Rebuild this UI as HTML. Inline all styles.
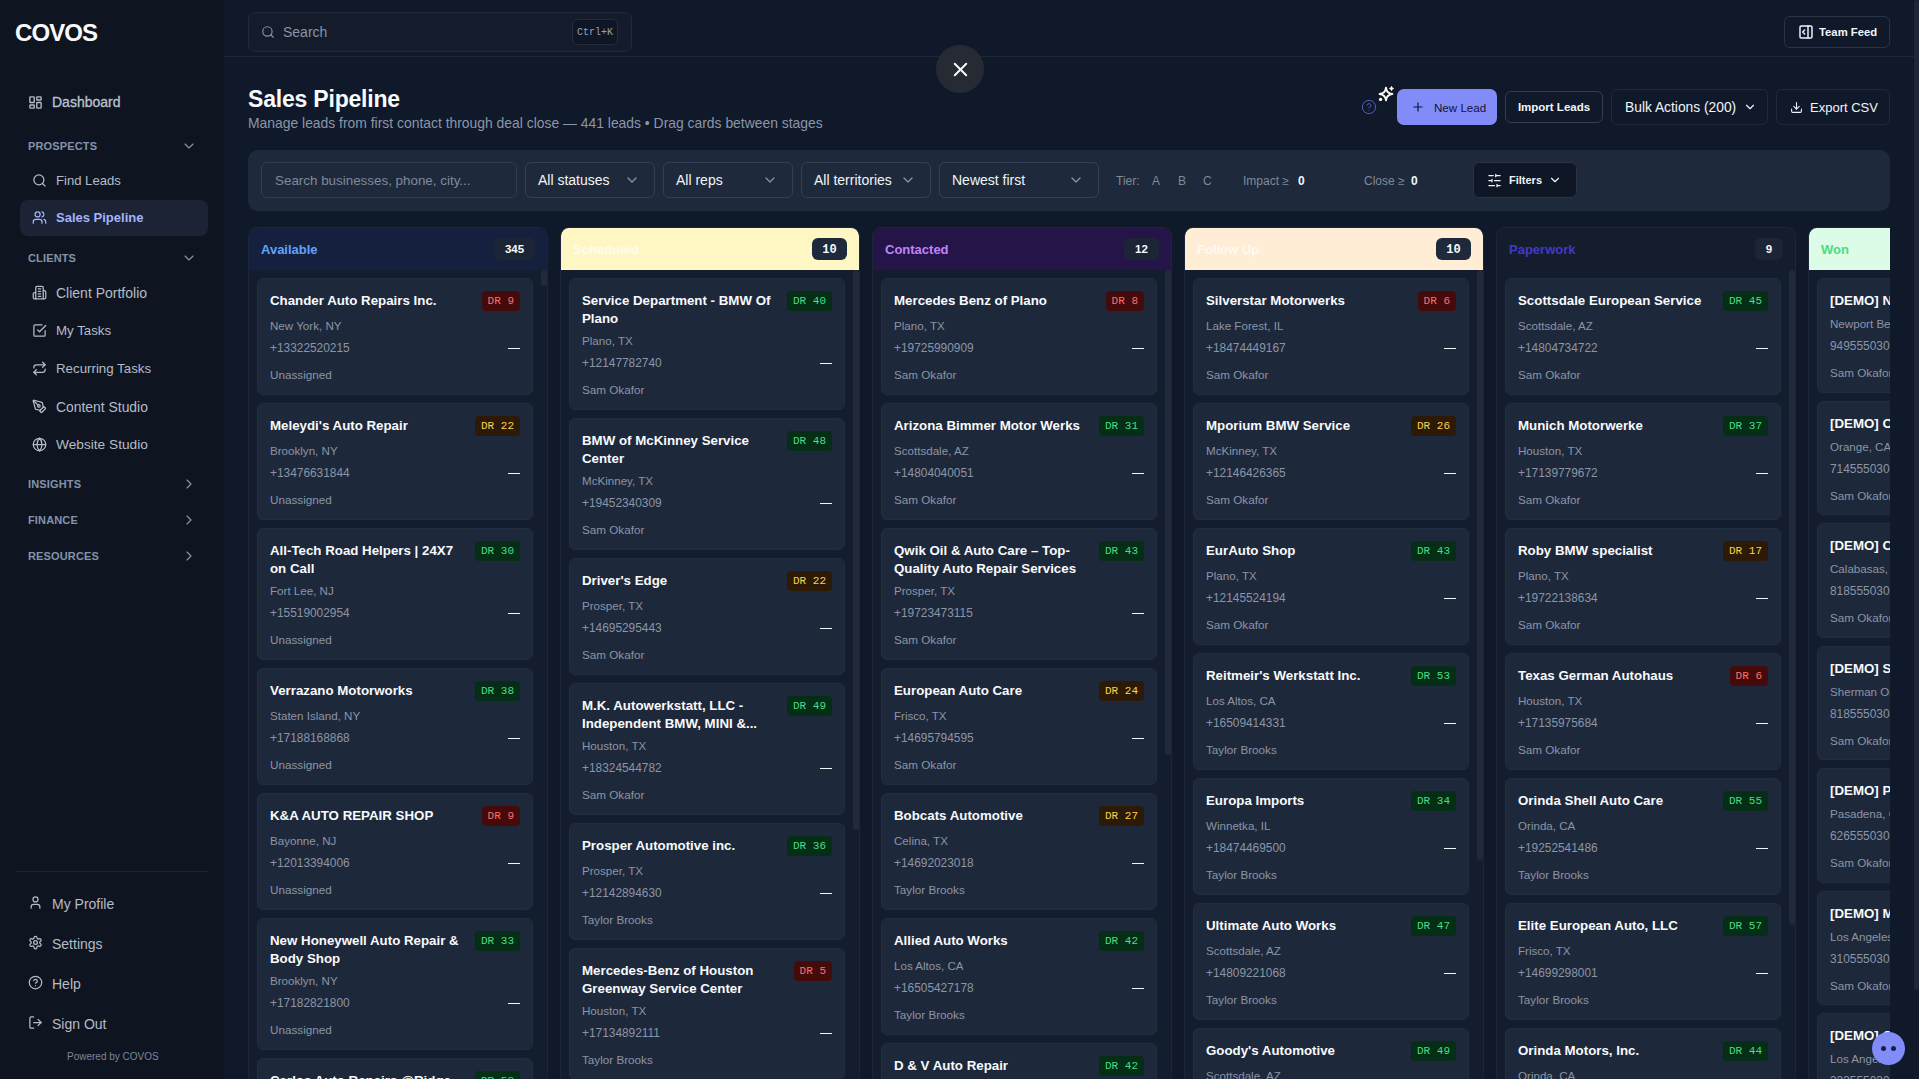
<!DOCTYPE html>
<html><head><meta charset="utf-8"><title>Sales Pipeline</title>
<style>
*{margin:0;padding:0}
html,body{width:1919px;height:1079px;overflow:hidden;background:#10192a;font-family:"Liberation Sans",sans-serif;}
svg{display:block}
</style></head><body>
<div style="position:relative;width:1919px;height:1079px;overflow:hidden;">
<div style="position:absolute;left:0;top:0;width:224px;height:1079px;background:#0f1520;"><div style="position:absolute;left:15px;top:18px;font-size:24px;font-weight:700;color:#f8fafc;letter-spacing:-0.9px;line-height:30px;">COVOS</div><div style="position:absolute;left:28px;top:94.5px;color:#b4bcc8;width:15px;height:15px;line-height:0;"><svg width="15" height="15" viewBox="0 0 24 24" fill="none" stroke="currentColor" stroke-width="2.2" stroke-linecap="round" stroke-linejoin="round" ><rect width="7" height="9" x="3" y="3" rx="1"/><rect width="7" height="5" x="14" y="3" rx="1"/><rect width="7" height="9" x="14" y="12" rx="1"/><rect width="7" height="5" x="3" y="16" rx="1"/></svg></div><div style="position:absolute;left:52px;top:93px;font-size:14px;line-height:18px;color:#b4bcc8;white-space:nowrap;font-weight:400;-webkit-text-stroke:0.3px;color:#b9c3d2;">Dashboard</div><div style="position:absolute;left:28px;top:138px;font-size:11px;font-weight:700;letter-spacing:0.15px;color:#8492ab;line-height:16px;">PROSPECTS</div><div style="position:absolute;left:181px;top:138px;color:#8a93a3;line-height:0;"><svg width="16" height="16" viewBox="0 0 24 24" fill="none" stroke="currentColor" stroke-width="1.75" stroke-linecap="round" stroke-linejoin="round" ><path d="m6 9 6 6 6-6"/></svg></div><div style="position:absolute;left:32px;top:173px;color:#b4bcc8;width:15px;height:15px;line-height:0;"><svg width="15" height="15" viewBox="0 0 24 24" fill="none" stroke="currentColor" stroke-width="2" stroke-linecap="round" stroke-linejoin="round" ><circle cx="11" cy="11" r="8"/><path d="m21 21-4.3-4.3"/></svg></div><div style="position:absolute;left:56px;top:172px;font-size:13.1px;line-height:18px;color:#b4bcc8;white-space:nowrap;font-weight:400;">Find Leads</div><div style="position:absolute;left:20px;top:200px;width:188px;height:36px;background:#1c2335;border-radius:8px;"></div><div style="position:absolute;left:32px;top:210px;color:#a5b4fc;width:15px;height:15px;line-height:0;"><svg width="15" height="15" viewBox="0 0 24 24" fill="none" stroke="currentColor" stroke-width="2" stroke-linecap="round" stroke-linejoin="round" ><path d="M16 21v-2a4 4 0 0 0-4-4H6a4 4 0 0 0-4 4v2"/><circle cx="9" cy="7" r="4"/><path d="M22 21v-2a4 4 0 0 0-3-3.87"/><path d="M16 3.13a4 4 0 0 1 0 7.75"/></svg></div><div style="position:absolute;left:56px;top:209px;font-size:13px;line-height:18px;color:#a5b4fc;white-space:nowrap;font-weight:700;">Sales Pipeline</div><div style="position:absolute;left:28px;top:250px;font-size:11px;font-weight:700;letter-spacing:0.15px;color:#8492ab;line-height:16px;">CLIENTS</div><div style="position:absolute;left:181px;top:250px;color:#8a93a3;line-height:0;"><svg width="16" height="16" viewBox="0 0 24 24" fill="none" stroke="currentColor" stroke-width="1.75" stroke-linecap="round" stroke-linejoin="round" ><path d="m6 9 6 6 6-6"/></svg></div><div style="position:absolute;left:32px;top:285px;color:#b4bcc8;width:15px;height:15px;line-height:0;"><svg width="15" height="15" viewBox="0 0 24 24" fill="none" stroke="currentColor" stroke-width="2" stroke-linecap="round" stroke-linejoin="round" ><path d="M6 22V4a2 2 0 0 1 2-2h8a2 2 0 0 1 2 2v18Z"/><path d="M6 12H4a2 2 0 0 0-2 2v6a2 2 0 0 0 2 2h2"/><path d="M18 9h2a2 2 0 0 1 2 2v9a2 2 0 0 1-2 2h-2"/><path d="M10 6h4"/><path d="M10 10h4"/><path d="M10 14h4"/><path d="M10 18h4"/></svg></div><div style="position:absolute;left:56px;top:284px;font-size:14px;line-height:18px;color:#b4bcc8;white-space:nowrap;font-weight:400;">Client Portfolio</div><div style="position:absolute;left:32px;top:323px;color:#b4bcc8;width:15px;height:15px;line-height:0;"><svg width="15" height="15" viewBox="0 0 24 24" fill="none" stroke="currentColor" stroke-width="2" stroke-linecap="round" stroke-linejoin="round" ><path d="m9 11 3 3L22 4"/><path d="M21 12v7a2 2 0 0 1-2 2H5a2 2 0 0 1-2-2V5a2 2 0 0 1 2-2h11"/></svg></div><div style="position:absolute;left:56px;top:322px;font-size:13.3px;line-height:18px;color:#b4bcc8;white-space:nowrap;font-weight:400;">My Tasks</div><div style="position:absolute;left:32px;top:361px;color:#b4bcc8;width:15px;height:15px;line-height:0;"><svg width="15" height="15" viewBox="0 0 24 24" fill="none" stroke="currentColor" stroke-width="2" stroke-linecap="round" stroke-linejoin="round" ><path d="m17 2 4 4-4 4"/><path d="M3 11v-1a4 4 0 0 1 4-4h14"/><path d="m7 22-4-4 4-4"/><path d="M21 13v1a4 4 0 0 1-4 4H3"/></svg></div><div style="position:absolute;left:56px;top:360px;font-size:13.3px;line-height:18px;color:#b4bcc8;white-space:nowrap;font-weight:400;">Recurring Tasks</div><div style="position:absolute;left:32px;top:399px;color:#b4bcc8;width:15px;height:15px;line-height:0;"><svg width="15" height="15" viewBox="0 0 24 24" fill="none" stroke="currentColor" stroke-width="2" stroke-linecap="round" stroke-linejoin="round" ><path d="M15.707 21.293a1 1 0 0 1-1.414 0l-1.586-1.586a1 1 0 0 1 0-1.414l5.586-5.586a1 1 0 0 1 1.414 0l1.586 1.586a1 1 0 0 1 0 1.414z"/><path d="m18 13-1.375-6.874a1 1 0 0 0-.746-.776L3.235 2.028a1 1 0 0 0-1.207 1.207L5.35 15.879a1 1 0 0 0 .776.746L13 18"/><path d="m2.3 2.3 7.286 7.286"/><circle cx="11" cy="11" r="2"/></svg></div><div style="position:absolute;left:56px;top:398px;font-size:13.9px;line-height:18px;color:#b4bcc8;white-space:nowrap;font-weight:400;">Content Studio</div><div style="position:absolute;left:32px;top:437px;color:#b4bcc8;width:15px;height:15px;line-height:0;"><svg width="15" height="15" viewBox="0 0 24 24" fill="none" stroke="currentColor" stroke-width="2" stroke-linecap="round" stroke-linejoin="round" ><circle cx="12" cy="12" r="10"/><path d="M12 2a14.5 14.5 0 0 0 0 20 14.5 14.5 0 0 0 0-20"/><path d="M2 12h20"/></svg></div><div style="position:absolute;left:56px;top:436px;font-size:13.7px;line-height:18px;color:#b4bcc8;white-space:nowrap;font-weight:400;">Website Studio</div><div style="position:absolute;left:28px;top:476px;font-size:11px;font-weight:700;letter-spacing:0.15px;color:#8492ab;line-height:16px;">INSIGHTS</div><div style="position:absolute;left:181px;top:476px;color:#8a93a3;line-height:0;"><svg width="16" height="16" viewBox="0 0 24 24" fill="none" stroke="currentColor" stroke-width="1.75" stroke-linecap="round" stroke-linejoin="round" ><path d="m9 18 6-6-6-6"/></svg></div><div style="position:absolute;left:28px;top:512px;font-size:11px;font-weight:700;letter-spacing:0.15px;color:#8492ab;line-height:16px;">FINANCE</div><div style="position:absolute;left:181px;top:512px;color:#8a93a3;line-height:0;"><svg width="16" height="16" viewBox="0 0 24 24" fill="none" stroke="currentColor" stroke-width="1.75" stroke-linecap="round" stroke-linejoin="round" ><path d="m9 18 6-6-6-6"/></svg></div><div style="position:absolute;left:28px;top:548px;font-size:11px;font-weight:700;letter-spacing:0.15px;color:#8492ab;line-height:16px;">RESOURCES</div><div style="position:absolute;left:181px;top:548px;color:#8a93a3;line-height:0;"><svg width="16" height="16" viewBox="0 0 24 24" fill="none" stroke="currentColor" stroke-width="1.75" stroke-linecap="round" stroke-linejoin="round" ><path d="m9 18 6-6-6-6"/></svg></div><div style="position:absolute;left:16px;top:871px;width:192px;height:1px;background:#1f2633;"></div><div style="position:absolute;left:28px;top:895px;color:#b4bcc8;width:15px;height:15px;line-height:0;"><svg width="15" height="15" viewBox="0 0 24 24" fill="none" stroke="currentColor" stroke-width="2" stroke-linecap="round" stroke-linejoin="round" ><path d="M19 21v-2a4 4 0 0 0-4-4H9a4 4 0 0 0-4 4v2"/><circle cx="12" cy="7" r="4"/></svg></div><div style="position:absolute;left:52px;top:895px;font-size:14px;line-height:18px;color:#b4bcc8;white-space:nowrap;font-weight:400;">My Profile</div><div style="position:absolute;left:28px;top:935px;color:#b4bcc8;width:15px;height:15px;line-height:0;"><svg width="15" height="15" viewBox="0 0 24 24" fill="none" stroke="currentColor" stroke-width="2" stroke-linecap="round" stroke-linejoin="round" ><path d="M12.22 2h-.44a2 2 0 0 0-2 2v.18a2 2 0 0 1-1 1.73l-.43.25a2 2 0 0 1-2 0l-.15-.08a2 2 0 0 0-2.73.73l-.22.38a2 2 0 0 0 .73 2.730l.15.1a2 2 0 0 1 1 1.72v.51a2 2 0 0 1-1 1.74l-.15.09a2 2 0 0 0-.73 2.73l.22.38a2 2 0 0 0 2.73.73l.15-.08a2 2 0 0 1 2 0l.43.25a2 2 0 0 1 1 1.73V20a2 2 0 0 0 2 2h.44a2 2 0 0 0 2-2v-.18a2 2 0 0 1 1-1.73l.43-.25a2 2 0 0 1 2 0l.15.08a2 2 0 0 0 2.73-.73l.22-.39a2 2 0 0 0-.73-2.73l-.15-.08a2 2 0 0 1-1-1.74v-.5a2 2 0 0 1 1-1.74l.15-.09a2 2 0 0 0 .73-2.73l-.22-.38a2 2 0 0 0-2.73-.73l-.15.08a2 2 0 0 1-2 0l-.43-.25a2 2 0 0 1-1-1.73V4a2 2 0 0 0-2-2z"/><circle cx="12" cy="12" r="3"/></svg></div><div style="position:absolute;left:52px;top:935px;font-size:14px;line-height:18px;color:#b4bcc8;white-space:nowrap;font-weight:400;">Settings</div><div style="position:absolute;left:28px;top:975px;color:#b4bcc8;width:15px;height:15px;line-height:0;"><svg width="15" height="15" viewBox="0 0 24 24" fill="none" stroke="currentColor" stroke-width="2" stroke-linecap="round" stroke-linejoin="round" ><circle cx="12" cy="12" r="10"/><path d="M9.09 9a3 3 0 0 1 5.83 1c0 2-3 3-3 3"/><path d="M12 17h.01"/></svg></div><div style="position:absolute;left:52px;top:975px;font-size:14px;line-height:18px;color:#b4bcc8;white-space:nowrap;font-weight:400;">Help</div><div style="position:absolute;left:28px;top:1015px;color:#b4bcc8;width:15px;height:15px;line-height:0;"><svg width="15" height="15" viewBox="0 0 24 24" fill="none" stroke="currentColor" stroke-width="2" stroke-linecap="round" stroke-linejoin="round" ><path d="M9 21H5a2 2 0 0 1-2-2V5a2 2 0 0 1 2-2h4"/><path d="m16 17 5-5-5-5"/><path d="M21 12H9"/></svg></div><div style="position:absolute;left:52px;top:1015px;font-size:14px;line-height:18px;color:#b4bcc8;white-space:nowrap;font-weight:400;">Sign Out</div><div style="position:absolute;left:67px;top:1050px;font-size:10px;color:#7c8699;line-height:14px;white-space:nowrap;">Powered by COVOS</div></div><div style="position:absolute;left:224px;top:56px;width:1695px;height:1px;background:#1f2737;"></div><div style="position:absolute;left:248px;top:12px;width:382px;height:38px;background:#141b2a;border:1px solid #222a3a;border-radius:7px;"></div><div style="position:absolute;left:261px;top:25px;color:#8a93a3;line-height:0;"><svg width="14" height="14" viewBox="0 0 24 24" fill="none" stroke="currentColor" stroke-width="2" stroke-linecap="round" stroke-linejoin="round" ><circle cx="11" cy="11" r="8"/><path d="m21 21-4.3-4.3"/></svg></div><div style="position:absolute;left:283px;top:23px;font-size:14px;line-height:18px;color:#8a93a3;">Search</div><div style="position:absolute;left:572px;top:19px;width:46px;height:26px;box-sizing:border-box;border:1px solid #252d3d;border-radius:5px;background:#0f1626;font-family:'Liberation Mono',monospace;font-size:10px;color:#98a2b3;line-height:25px;text-align:center;">Ctrl+K</div><div style="position:absolute;left:1784px;top:16px;box-sizing:border-box;width:106px;height:32px;border:1px solid #2c3444;border-radius:6px;display:flex;align-items:center;padding-left:13px;font-size:11.3px;font-weight:700;color:#f1f5f9;"><svg width="16" height="16" viewBox="0 0 24 24" fill="none" stroke="currentColor" stroke-width="2.2" stroke-linecap="round" stroke-linejoin="round" ><rect width="18" height="18" x="3" y="3" rx="2"/><path d="M15 3v18"/><path d="m10 15-3-3 3-3"/></svg><span style="margin-left:5px">Team Feed</span></div><div style="position:absolute;left:936px;top:45px;width:48px;height:48px;border-radius:50%;background:#262b33;color:#f8fafc;display:flex;align-items:center;justify-content:center;"><svg width="23" height="23" viewBox="0 0 24 24" fill="none" stroke="currentColor" stroke-width="2" stroke-linecap="round" stroke-linejoin="round" ><path d="M18 6 6 18"/><path d="m6 6 12 12"/></svg></div><div style="position:absolute;left:248px;top:84px;font-size:23px;font-weight:700;color:#f8fafc;line-height:30px;letter-spacing:-0.2px;">Sales Pipeline</div><div style="position:absolute;left:248px;top:114px;font-size:13.9px;color:#8b96a8;line-height:18px;white-space:nowrap;">Manage leads from first contact through deal close — 441 leads • Drag cards between stages</div><div style="position:absolute;left:1361px;top:99px;color:#5a5fd0;line-height:0;"><svg width="16" height="16" viewBox="0 0 24 24" fill="none" stroke="currentColor" stroke-width="1.4" stroke-linecap="round" stroke-linejoin="round" ><circle cx="12" cy="12" r="10"/><path d="M9.09 9a3 3 0 0 1 5.83 1c0 2-3 3-3 3"/><path d="M12 17h.01"/></svg></div><div style="position:absolute;left:1377px;top:85px;line-height:0;"><svg width="20" height="20" viewBox="0 0 20 20"><path d="M9 2.6 Q9.6 8.4 15.4 9 Q9.6 9.6 9 15.4 Q8.4 9.6 2.6 9 Q8.4 8.4 9 2.6 Z" fill="none" stroke="#fffaf0" stroke-width="1.9" stroke-linejoin="round"/><path d="M14.5 1.3 Q14.8 3.2 16.6 3.5 Q14.8 3.8 14.5 5.7 Q14.2 3.8 12.4 3.5 Q14.2 3.2 14.5 1.3Z" fill="#fff4e0" stroke="#fff4e0" stroke-width="0.8"/><circle cx="3.6" cy="14.4" r="1.7" fill="#fffaf0"/></svg></div><div style="position:absolute;left:1397px;top:89px;box-sizing:border-box;width:100px;height:36px;border-radius:7px;background:#818cf8;color:#14123a;display:flex;align-items:center;padding-left:14px;font-size:11.6px;"><svg width="14" height="14" viewBox="0 0 24 24" fill="none" stroke="currentColor" stroke-width="2" stroke-linecap="round" stroke-linejoin="round" ><path d="M5 12h14"/><path d="M12 5v14"/></svg><span style="margin-left:9px">New Lead</span></div><div style="position:absolute;left:1505px;top:91px;box-sizing:border-box;width:98px;height:32px;border:1px solid #363d4c;border-radius:6px;display:flex;align-items:center;justify-content:center;font-size:11.5px;font-weight:700;color:#f1f5f9;">Import Leads</div><div style="position:absolute;left:1611px;top:89px;box-sizing:border-box;width:157px;height:36px;border:1px solid #222a39;border-radius:6px;display:flex;align-items:center;padding-left:13px;font-size:13.8px;color:#f1f5f9;">Bulk Actions (200)<svg width="14" height="14" viewBox="0 0 24 24" fill="none" stroke="currentColor" stroke-width="2" stroke-linecap="round" stroke-linejoin="round" style="margin-left:7px"><path d="m6 9 6 6 6-6"/></svg></div><div style="position:absolute;left:1776px;top:89px;box-sizing:border-box;width:114px;height:36px;border:1px solid #222a39;border-radius:6px;display:flex;align-items:center;padding-left:13px;font-size:13px;color:#f1f5f9;"><svg width="13" height="13" viewBox="0 0 24 24" fill="none" stroke="currentColor" stroke-width="2" stroke-linecap="round" stroke-linejoin="round" ><path d="M21 15v4a2 2 0 0 1-2 2H5a2 2 0 0 1-2-2v-4"/><path d="m7 10 5 5 5-5"/><path d="M12 15V3"/></svg><span style="margin-left:7px">Export CSV</span></div><div style="position:absolute;left:248px;top:150px;width:1642px;height:61px;background:#1e293b;border-radius:10px;"></div><div style="position:absolute;left:261px;top:162px;box-sizing:border-box;width:256px;height:36px;border:1px solid #333d4f;border-radius:6px;background:#1e293b;padding-left:13px;font-size:13.4px;line-height:36px;color:#808a9b;white-space:nowrap;">Search businesses, phone, city...</div><div style="position:absolute;left:525px;top:162px;box-sizing:border-box;width:130px;height:36px;border:1px solid #364052;border-radius:6px;background:#1e293b;padding:0 12px 0 12px;display:flex;align-items:center;justify-content:space-between;font-size:14px;color:#f1f5f9;"><span>All statuses</span><svg width="16" height="16" viewBox="0 0 24 24" fill="none" stroke="currentColor" stroke-width="1.9" stroke-linecap="round" stroke-linejoin="round" style="color:#8a94a5;margin-right:2px"><path d="m6 9 6 6 6-6"/></svg></div><div style="position:absolute;left:663px;top:162px;box-sizing:border-box;width:130px;height:36px;border:1px solid #364052;border-radius:6px;background:#1e293b;padding:0 12px 0 12px;display:flex;align-items:center;justify-content:space-between;font-size:14px;color:#f1f5f9;"><span>All reps</span><svg width="16" height="16" viewBox="0 0 24 24" fill="none" stroke="currentColor" stroke-width="1.9" stroke-linecap="round" stroke-linejoin="round" style="color:#8a94a5;margin-right:2px"><path d="m6 9 6 6 6-6"/></svg></div><div style="position:absolute;left:801px;top:162px;box-sizing:border-box;width:130px;height:36px;border:1px solid #364052;border-radius:6px;background:#1e293b;padding:0 12px 0 12px;display:flex;align-items:center;justify-content:space-between;font-size:14px;color:#f1f5f9;"><span>All territories</span><svg width="16" height="16" viewBox="0 0 24 24" fill="none" stroke="currentColor" stroke-width="1.9" stroke-linecap="round" stroke-linejoin="round" style="color:#8a94a5;margin-right:2px"><path d="m6 9 6 6 6-6"/></svg></div><div style="position:absolute;left:939px;top:162px;box-sizing:border-box;width:160px;height:36px;border:1px solid #364052;border-radius:6px;background:#1e293b;padding:0 12px 0 12px;display:flex;align-items:center;justify-content:space-between;font-size:14px;color:#f1f5f9;"><span>Newest first</span><svg width="16" height="16" viewBox="0 0 24 24" fill="none" stroke="currentColor" stroke-width="1.9" stroke-linecap="round" stroke-linejoin="round" style="color:#8a94a5;margin-right:2px"><path d="m6 9 6 6 6-6"/></svg></div><div style="position:absolute;left:1116px;top:173px;font-size:12px;color:#7f8a9c;line-height:16px;">Tier:</div><div style="position:absolute;left:1152px;top:173px;font-size:12px;color:#7f8a9c;line-height:16px;">A</div><div style="position:absolute;left:1178px;top:173px;font-size:12px;color:#7f8a9c;line-height:16px;">B</div><div style="position:absolute;left:1203px;top:173px;font-size:12px;color:#7f8a9c;line-height:16px;">C</div><div style="position:absolute;left:1243px;top:173px;font-size:12px;color:#7f8a9c;line-height:16px;">Impact ≥</div><div style="position:absolute;left:1298px;top:173px;font-size:12px;font-weight:700;color:#f1f5f9;line-height:16px;">0</div><div style="position:absolute;left:1364px;top:173px;font-size:12px;color:#7f8a9c;line-height:16px;">Close ≥</div><div style="position:absolute;left:1411px;top:173px;font-size:12px;font-weight:700;color:#f1f5f9;line-height:16px;">0</div><div style="position:absolute;left:1473px;top:162px;box-sizing:border-box;width:104px;height:36px;border:1px solid #2a3343;border-radius:6px;background:#0f1626;display:flex;align-items:center;padding-left:13px;font-size:11px;font-weight:700;color:#f1f5f9;"><svg width="15" height="15" viewBox="0 0 24 24" fill="none" stroke="currentColor" stroke-width="2" stroke-linecap="round" stroke-linejoin="round" ><path d="M21 4h-7M10 4H3M21 12h-9M8 12H3M21 20h-5M12 20H3M14 2v4M8 10v4M16 18v4"/></svg><span style="margin-left:7px">Filters</span><svg width="14" height="14" viewBox="0 0 24 24" fill="none" stroke="currentColor" stroke-width="2" stroke-linecap="round" stroke-linejoin="round" style="margin-left:6px"><path d="m6 9 6 6 6-6"/></svg></div><div style="position:absolute;left:248px;top:0;width:1642px;height:1079px;overflow:hidden;"><div style="position:absolute;left:-248px;top:0;"><div style="position:absolute;left:248px;top:227px;width:300px;height:900px;box-sizing:border-box;background:#131d2e;border:1px solid #1d2638;border-radius:9px;overflow:hidden;"><div style="position:absolute;left:0;top:0;width:298px;height:42px;background:#15203f;border-radius:8px 8px 0 0;"></div><div style="position:absolute;left:12px;top:13px;font-size:13px;font-weight:700;color:#60a5fa;line-height:18px;">Available</div><div style="position:absolute;left:245px;top:10px;width:41px;height:22px;border-radius:6px;background:#1c2536;font-size:11.5px;font-weight:700;color:#f8fafc;line-height:23px;text-align:center;">345</div><div style="position:absolute;left:292px;top:42px;width:6px;height:16px;background:#212a3a;border-radius:3px;"></div><div style="position:absolute;left:8px;top:50px;width:276px;height:117px;box-sizing:border-box;background:#1e283b;border:1px solid #232d40;border-radius:6px;overflow:hidden;"><div style="position:absolute;left:12px;top:13px;width:190px;font-size:13.3px;font-weight:700;color:#f8fafc;line-height:18px;white-space:nowrap;">Chander Auto Repairs Inc.</div><div style="position:absolute;right:12px;top:12px;height:20px;padding:0 6px;border-radius:4px;background:#450a0a;color:#f87171;font-family:'Liberation Mono',monospace;font-size:11px;line-height:20px;white-space:pre;">DR 9</div><div style="position:absolute;left:12px;top:39px;font-size:11.6px;color:#8b95a6;line-height:16px;white-space:nowrap;">New York, NY</div><div style="position:absolute;left:12px;top:61px;font-size:11.9px;color:#8b95a6;line-height:16px;white-space:nowrap;">+13322520215</div><div style="position:absolute;right:12px;top:69px;width:12px;height:1.2px;background:#f1f5f9;"></div><div style="position:absolute;left:12px;top:88px;font-size:11.7px;color:#8b95a6;line-height:16px;white-space:nowrap;">Unassigned</div></div><div style="position:absolute;left:8px;top:175px;width:276px;height:117px;box-sizing:border-box;background:#1e283b;border:1px solid #232d40;border-radius:6px;overflow:hidden;"><div style="position:absolute;left:12px;top:13px;width:190px;font-size:13.3px;font-weight:700;color:#f8fafc;line-height:18px;white-space:nowrap;">Meleydi's Auto Repair</div><div style="position:absolute;right:12px;top:12px;height:20px;padding:0 6px;border-radius:4px;background:#2d1a06;color:#fcd34d;font-family:'Liberation Mono',monospace;font-size:11px;line-height:20px;white-space:pre;">DR 22</div><div style="position:absolute;left:12px;top:39px;font-size:11.6px;color:#8b95a6;line-height:16px;white-space:nowrap;">Brooklyn, NY</div><div style="position:absolute;left:12px;top:61px;font-size:11.9px;color:#8b95a6;line-height:16px;white-space:nowrap;">+13476631844</div><div style="position:absolute;right:12px;top:69px;width:12px;height:1.2px;background:#f1f5f9;"></div><div style="position:absolute;left:12px;top:88px;font-size:11.7px;color:#8b95a6;line-height:16px;white-space:nowrap;">Unassigned</div></div><div style="position:absolute;left:8px;top:300px;width:276px;height:132px;box-sizing:border-box;background:#1e283b;border:1px solid #232d40;border-radius:6px;overflow:hidden;"><div style="position:absolute;left:12px;top:13px;width:190px;font-size:13.3px;font-weight:700;color:#f8fafc;line-height:18px;white-space:nowrap;">All-Tech Road Helpers | 24X7<br>on Call</div><div style="position:absolute;right:12px;top:12px;height:20px;padding:0 6px;border-radius:4px;background:#052e16;color:#4ade80;font-family:'Liberation Mono',monospace;font-size:11px;line-height:20px;white-space:pre;">DR 30</div><div style="position:absolute;left:12px;top:54px;font-size:11.6px;color:#8b95a6;line-height:16px;white-space:nowrap;">Fort Lee, NJ</div><div style="position:absolute;left:12px;top:76px;font-size:11.9px;color:#8b95a6;line-height:16px;white-space:nowrap;">+15519002954</div><div style="position:absolute;right:12px;top:84px;width:12px;height:1.2px;background:#f1f5f9;"></div><div style="position:absolute;left:12px;top:103px;font-size:11.7px;color:#8b95a6;line-height:16px;white-space:nowrap;">Unassigned</div></div><div style="position:absolute;left:8px;top:440px;width:276px;height:117px;box-sizing:border-box;background:#1e283b;border:1px solid #232d40;border-radius:6px;overflow:hidden;"><div style="position:absolute;left:12px;top:13px;width:190px;font-size:13.3px;font-weight:700;color:#f8fafc;line-height:18px;white-space:nowrap;">Verrazano Motorworks</div><div style="position:absolute;right:12px;top:12px;height:20px;padding:0 6px;border-radius:4px;background:#052e16;color:#4ade80;font-family:'Liberation Mono',monospace;font-size:11px;line-height:20px;white-space:pre;">DR 38</div><div style="position:absolute;left:12px;top:39px;font-size:11.6px;color:#8b95a6;line-height:16px;white-space:nowrap;">Staten Island, NY</div><div style="position:absolute;left:12px;top:61px;font-size:11.9px;color:#8b95a6;line-height:16px;white-space:nowrap;">+17188168868</div><div style="position:absolute;right:12px;top:69px;width:12px;height:1.2px;background:#f1f5f9;"></div><div style="position:absolute;left:12px;top:88px;font-size:11.7px;color:#8b95a6;line-height:16px;white-space:nowrap;">Unassigned</div></div><div style="position:absolute;left:8px;top:565px;width:276px;height:117px;box-sizing:border-box;background:#1e283b;border:1px solid #232d40;border-radius:6px;overflow:hidden;"><div style="position:absolute;left:12px;top:13px;width:190px;font-size:13.3px;font-weight:700;color:#f8fafc;line-height:18px;white-space:nowrap;">K&amp;A AUTO REPAIR SHOP</div><div style="position:absolute;right:12px;top:12px;height:20px;padding:0 6px;border-radius:4px;background:#450a0a;color:#f87171;font-family:'Liberation Mono',monospace;font-size:11px;line-height:20px;white-space:pre;">DR 9</div><div style="position:absolute;left:12px;top:39px;font-size:11.6px;color:#8b95a6;line-height:16px;white-space:nowrap;">Bayonne, NJ</div><div style="position:absolute;left:12px;top:61px;font-size:11.9px;color:#8b95a6;line-height:16px;white-space:nowrap;">+12013394006</div><div style="position:absolute;right:12px;top:69px;width:12px;height:1.2px;background:#f1f5f9;"></div><div style="position:absolute;left:12px;top:88px;font-size:11.7px;color:#8b95a6;line-height:16px;white-space:nowrap;">Unassigned</div></div><div style="position:absolute;left:8px;top:690px;width:276px;height:132px;box-sizing:border-box;background:#1e283b;border:1px solid #232d40;border-radius:6px;overflow:hidden;"><div style="position:absolute;left:12px;top:13px;width:190px;font-size:13.3px;font-weight:700;color:#f8fafc;line-height:18px;white-space:nowrap;">New Honeywell Auto Repair &amp;<br>Body Shop</div><div style="position:absolute;right:12px;top:12px;height:20px;padding:0 6px;border-radius:4px;background:#052e16;color:#4ade80;font-family:'Liberation Mono',monospace;font-size:11px;line-height:20px;white-space:pre;">DR 33</div><div style="position:absolute;left:12px;top:54px;font-size:11.6px;color:#8b95a6;line-height:16px;white-space:nowrap;">Brooklyn, NY</div><div style="position:absolute;left:12px;top:76px;font-size:11.9px;color:#8b95a6;line-height:16px;white-space:nowrap;">+17182821800</div><div style="position:absolute;right:12px;top:84px;width:12px;height:1.2px;background:#f1f5f9;"></div><div style="position:absolute;left:12px;top:103px;font-size:11.7px;color:#8b95a6;line-height:16px;white-space:nowrap;">Unassigned</div></div><div style="position:absolute;left:8px;top:830px;width:276px;height:132px;box-sizing:border-box;background:#1e283b;border:1px solid #232d40;border-radius:6px;overflow:hidden;"><div style="position:absolute;left:12px;top:13px;width:190px;font-size:13.3px;font-weight:700;color:#f8fafc;line-height:18px;white-space:nowrap;">Carlos Auto Repairs @Ridge<br>wood</div><div style="position:absolute;right:12px;top:12px;height:20px;padding:0 6px;border-radius:4px;background:#052e16;color:#4ade80;font-family:'Liberation Mono',monospace;font-size:11px;line-height:20px;white-space:pre;">DR 53</div><div style="position:absolute;left:12px;top:54px;font-size:11.6px;color:#8b95a6;line-height:16px;white-space:nowrap;">Ridgewood, NY</div><div style="position:absolute;left:12px;top:76px;font-size:11.9px;color:#8b95a6;line-height:16px;white-space:nowrap;">+17183660000</div><div style="position:absolute;right:12px;top:84px;width:12px;height:1.2px;background:#f1f5f9;"></div><div style="position:absolute;left:12px;top:103px;font-size:11.7px;color:#8b95a6;line-height:16px;white-space:nowrap;">Unassigned</div></div></div><div style="position:absolute;left:560px;top:227px;width:300px;height:900px;box-sizing:border-box;background:#131d2e;border:1px solid #1d2638;border-radius:9px;overflow:hidden;"><div style="position:absolute;left:0;top:-1px;width:298px;height:43px;background:#fef6c3;border-radius:9px 9px 0 0;"></div><div style="position:absolute;left:12px;top:13px;font-size:13px;font-weight:700;color:rgba(255,255,255,0.72);line-height:18px;">Scheduled</div><div style="position:absolute;left:251px;top:10px;width:35px;height:22px;border-radius:6px;background:#1e293b;font-family:'Liberation Mono',monospace;font-size:12px;padding-top:1px;box-sizing:border-box;font-weight:700;color:#f8fafc;line-height:23px;text-align:center;">10</div><div style="position:absolute;left:292px;top:42px;width:6px;height:560px;background:#212a3a;border-radius:3px;"></div><div style="position:absolute;left:8px;top:50px;width:276px;height:132px;box-sizing:border-box;background:#1e283b;border:1px solid #232d40;border-radius:6px;overflow:hidden;"><div style="position:absolute;left:12px;top:13px;width:190px;font-size:13.3px;font-weight:700;color:#f8fafc;line-height:18px;white-space:nowrap;">Service Department - BMW Of<br>Plano</div><div style="position:absolute;right:12px;top:12px;height:20px;padding:0 6px;border-radius:4px;background:#052e16;color:#4ade80;font-family:'Liberation Mono',monospace;font-size:11px;line-height:20px;white-space:pre;">DR 40</div><div style="position:absolute;left:12px;top:54px;font-size:11.6px;color:#8b95a6;line-height:16px;white-space:nowrap;">Plano, TX</div><div style="position:absolute;left:12px;top:76px;font-size:11.9px;color:#8b95a6;line-height:16px;white-space:nowrap;">+12147782740</div><div style="position:absolute;right:12px;top:84px;width:12px;height:1.2px;background:#f1f5f9;"></div><div style="position:absolute;left:12px;top:103px;font-size:11.7px;color:#8b95a6;line-height:16px;white-space:nowrap;">Sam Okafor</div></div><div style="position:absolute;left:8px;top:190px;width:276px;height:132px;box-sizing:border-box;background:#1e283b;border:1px solid #232d40;border-radius:6px;overflow:hidden;"><div style="position:absolute;left:12px;top:13px;width:190px;font-size:13.3px;font-weight:700;color:#f8fafc;line-height:18px;white-space:nowrap;">BMW of McKinney Service<br>Center</div><div style="position:absolute;right:12px;top:12px;height:20px;padding:0 6px;border-radius:4px;background:#052e16;color:#4ade80;font-family:'Liberation Mono',monospace;font-size:11px;line-height:20px;white-space:pre;">DR 48</div><div style="position:absolute;left:12px;top:54px;font-size:11.6px;color:#8b95a6;line-height:16px;white-space:nowrap;">McKinney, TX</div><div style="position:absolute;left:12px;top:76px;font-size:11.9px;color:#8b95a6;line-height:16px;white-space:nowrap;">+19452340309</div><div style="position:absolute;right:12px;top:84px;width:12px;height:1.2px;background:#f1f5f9;"></div><div style="position:absolute;left:12px;top:103px;font-size:11.7px;color:#8b95a6;line-height:16px;white-space:nowrap;">Sam Okafor</div></div><div style="position:absolute;left:8px;top:330px;width:276px;height:117px;box-sizing:border-box;background:#1e283b;border:1px solid #232d40;border-radius:6px;overflow:hidden;"><div style="position:absolute;left:12px;top:13px;width:190px;font-size:13.3px;font-weight:700;color:#f8fafc;line-height:18px;white-space:nowrap;">Driver's Edge</div><div style="position:absolute;right:12px;top:12px;height:20px;padding:0 6px;border-radius:4px;background:#2d1a06;color:#fcd34d;font-family:'Liberation Mono',monospace;font-size:11px;line-height:20px;white-space:pre;">DR 22</div><div style="position:absolute;left:12px;top:39px;font-size:11.6px;color:#8b95a6;line-height:16px;white-space:nowrap;">Prosper, TX</div><div style="position:absolute;left:12px;top:61px;font-size:11.9px;color:#8b95a6;line-height:16px;white-space:nowrap;">+14695295443</div><div style="position:absolute;right:12px;top:69px;width:12px;height:1.2px;background:#f1f5f9;"></div><div style="position:absolute;left:12px;top:88px;font-size:11.7px;color:#8b95a6;line-height:16px;white-space:nowrap;">Sam Okafor</div></div><div style="position:absolute;left:8px;top:455px;width:276px;height:132px;box-sizing:border-box;background:#1e283b;border:1px solid #232d40;border-radius:6px;overflow:hidden;"><div style="position:absolute;left:12px;top:13px;width:190px;font-size:13.3px;font-weight:700;color:#f8fafc;line-height:18px;white-space:nowrap;">M.K. Autowerkstatt, LLC -<br>Independent BMW, MINI &amp;...</div><div style="position:absolute;right:12px;top:12px;height:20px;padding:0 6px;border-radius:4px;background:#052e16;color:#4ade80;font-family:'Liberation Mono',monospace;font-size:11px;line-height:20px;white-space:pre;">DR 49</div><div style="position:absolute;left:12px;top:54px;font-size:11.6px;color:#8b95a6;line-height:16px;white-space:nowrap;">Houston, TX</div><div style="position:absolute;left:12px;top:76px;font-size:11.9px;color:#8b95a6;line-height:16px;white-space:nowrap;">+18324544782</div><div style="position:absolute;right:12px;top:84px;width:12px;height:1.2px;background:#f1f5f9;"></div><div style="position:absolute;left:12px;top:103px;font-size:11.7px;color:#8b95a6;line-height:16px;white-space:nowrap;">Sam Okafor</div></div><div style="position:absolute;left:8px;top:595px;width:276px;height:117px;box-sizing:border-box;background:#1e283b;border:1px solid #232d40;border-radius:6px;overflow:hidden;"><div style="position:absolute;left:12px;top:13px;width:190px;font-size:13.3px;font-weight:700;color:#f8fafc;line-height:18px;white-space:nowrap;">Prosper Automotive inc.</div><div style="position:absolute;right:12px;top:12px;height:20px;padding:0 6px;border-radius:4px;background:#052e16;color:#4ade80;font-family:'Liberation Mono',monospace;font-size:11px;line-height:20px;white-space:pre;">DR 36</div><div style="position:absolute;left:12px;top:39px;font-size:11.6px;color:#8b95a6;line-height:16px;white-space:nowrap;">Prosper, TX</div><div style="position:absolute;left:12px;top:61px;font-size:11.9px;color:#8b95a6;line-height:16px;white-space:nowrap;">+12142894630</div><div style="position:absolute;right:12px;top:69px;width:12px;height:1.2px;background:#f1f5f9;"></div><div style="position:absolute;left:12px;top:88px;font-size:11.7px;color:#8b95a6;line-height:16px;white-space:nowrap;">Taylor Brooks</div></div><div style="position:absolute;left:8px;top:720px;width:276px;height:132px;box-sizing:border-box;background:#1e283b;border:1px solid #232d40;border-radius:6px;overflow:hidden;"><div style="position:absolute;left:12px;top:13px;width:190px;font-size:13.3px;font-weight:700;color:#f8fafc;line-height:18px;white-space:nowrap;">Mercedes-Benz of Houston<br>Greenway Service Center</div><div style="position:absolute;right:12px;top:12px;height:20px;padding:0 6px;border-radius:4px;background:#450a0a;color:#f87171;font-family:'Liberation Mono',monospace;font-size:11px;line-height:20px;white-space:pre;">DR 5</div><div style="position:absolute;left:12px;top:54px;font-size:11.6px;color:#8b95a6;line-height:16px;white-space:nowrap;">Houston, TX</div><div style="position:absolute;left:12px;top:76px;font-size:11.9px;color:#8b95a6;line-height:16px;white-space:nowrap;">+17134892111</div><div style="position:absolute;right:12px;top:84px;width:12px;height:1.2px;background:#f1f5f9;"></div><div style="position:absolute;left:12px;top:103px;font-size:11.7px;color:#8b95a6;line-height:16px;white-space:nowrap;">Taylor Brooks</div></div></div><div style="position:absolute;left:872px;top:227px;width:300px;height:900px;box-sizing:border-box;background:#131d2e;border:1px solid #1d2638;border-radius:9px;overflow:hidden;"><div style="position:absolute;left:0;top:0;width:298px;height:42px;background:#251448;border-radius:8px 8px 0 0;"></div><div style="position:absolute;left:12px;top:13px;font-size:13px;font-weight:700;color:#c084fc;line-height:18px;">Contacted</div><div style="position:absolute;left:251px;top:10px;width:35px;height:22px;border-radius:6px;background:#1c2536;font-size:11.5px;font-weight:700;color:#f8fafc;line-height:23px;text-align:center;">12</div><div style="position:absolute;left:292px;top:42px;width:6px;height:485px;background:#212a3a;border-radius:3px;"></div><div style="position:absolute;left:8px;top:50px;width:276px;height:117px;box-sizing:border-box;background:#1e283b;border:1px solid #232d40;border-radius:6px;overflow:hidden;"><div style="position:absolute;left:12px;top:13px;width:190px;font-size:13.3px;font-weight:700;color:#f8fafc;line-height:18px;white-space:nowrap;">Mercedes Benz of Plano</div><div style="position:absolute;right:12px;top:12px;height:20px;padding:0 6px;border-radius:4px;background:#450a0a;color:#f87171;font-family:'Liberation Mono',monospace;font-size:11px;line-height:20px;white-space:pre;">DR 8</div><div style="position:absolute;left:12px;top:39px;font-size:11.6px;color:#8b95a6;line-height:16px;white-space:nowrap;">Plano, TX</div><div style="position:absolute;left:12px;top:61px;font-size:11.9px;color:#8b95a6;line-height:16px;white-space:nowrap;">+19725990909</div><div style="position:absolute;right:12px;top:69px;width:12px;height:1.2px;background:#f1f5f9;"></div><div style="position:absolute;left:12px;top:88px;font-size:11.7px;color:#8b95a6;line-height:16px;white-space:nowrap;">Sam Okafor</div></div><div style="position:absolute;left:8px;top:175px;width:276px;height:117px;box-sizing:border-box;background:#1e283b;border:1px solid #232d40;border-radius:6px;overflow:hidden;"><div style="position:absolute;left:12px;top:13px;width:190px;font-size:13.3px;font-weight:700;color:#f8fafc;line-height:18px;white-space:nowrap;">Arizona Bimmer Motor Werks</div><div style="position:absolute;right:12px;top:12px;height:20px;padding:0 6px;border-radius:4px;background:#052e16;color:#4ade80;font-family:'Liberation Mono',monospace;font-size:11px;line-height:20px;white-space:pre;">DR 31</div><div style="position:absolute;left:12px;top:39px;font-size:11.6px;color:#8b95a6;line-height:16px;white-space:nowrap;">Scottsdale, AZ</div><div style="position:absolute;left:12px;top:61px;font-size:11.9px;color:#8b95a6;line-height:16px;white-space:nowrap;">+14804040051</div><div style="position:absolute;right:12px;top:69px;width:12px;height:1.2px;background:#f1f5f9;"></div><div style="position:absolute;left:12px;top:88px;font-size:11.7px;color:#8b95a6;line-height:16px;white-space:nowrap;">Sam Okafor</div></div><div style="position:absolute;left:8px;top:300px;width:276px;height:132px;box-sizing:border-box;background:#1e283b;border:1px solid #232d40;border-radius:6px;overflow:hidden;"><div style="position:absolute;left:12px;top:13px;width:190px;font-size:13.3px;font-weight:700;color:#f8fafc;line-height:18px;white-space:nowrap;">Qwik Oil &amp; Auto Care – Top-<br>Quality Auto Repair Services</div><div style="position:absolute;right:12px;top:12px;height:20px;padding:0 6px;border-radius:4px;background:#052e16;color:#4ade80;font-family:'Liberation Mono',monospace;font-size:11px;line-height:20px;white-space:pre;">DR 43</div><div style="position:absolute;left:12px;top:54px;font-size:11.6px;color:#8b95a6;line-height:16px;white-space:nowrap;">Prosper, TX</div><div style="position:absolute;left:12px;top:76px;font-size:11.9px;color:#8b95a6;line-height:16px;white-space:nowrap;">+19723473115</div><div style="position:absolute;right:12px;top:84px;width:12px;height:1.2px;background:#f1f5f9;"></div><div style="position:absolute;left:12px;top:103px;font-size:11.7px;color:#8b95a6;line-height:16px;white-space:nowrap;">Sam Okafor</div></div><div style="position:absolute;left:8px;top:440px;width:276px;height:117px;box-sizing:border-box;background:#1e283b;border:1px solid #232d40;border-radius:6px;overflow:hidden;"><div style="position:absolute;left:12px;top:13px;width:190px;font-size:13.3px;font-weight:700;color:#f8fafc;line-height:18px;white-space:nowrap;">European Auto Care</div><div style="position:absolute;right:12px;top:12px;height:20px;padding:0 6px;border-radius:4px;background:#2d1a06;color:#fcd34d;font-family:'Liberation Mono',monospace;font-size:11px;line-height:20px;white-space:pre;">DR 24</div><div style="position:absolute;left:12px;top:39px;font-size:11.6px;color:#8b95a6;line-height:16px;white-space:nowrap;">Frisco, TX</div><div style="position:absolute;left:12px;top:61px;font-size:11.9px;color:#8b95a6;line-height:16px;white-space:nowrap;">+14695794595</div><div style="position:absolute;right:12px;top:69px;width:12px;height:1.2px;background:#f1f5f9;"></div><div style="position:absolute;left:12px;top:88px;font-size:11.7px;color:#8b95a6;line-height:16px;white-space:nowrap;">Sam Okafor</div></div><div style="position:absolute;left:8px;top:565px;width:276px;height:117px;box-sizing:border-box;background:#1e283b;border:1px solid #232d40;border-radius:6px;overflow:hidden;"><div style="position:absolute;left:12px;top:13px;width:190px;font-size:13.3px;font-weight:700;color:#f8fafc;line-height:18px;white-space:nowrap;">Bobcats Automotive</div><div style="position:absolute;right:12px;top:12px;height:20px;padding:0 6px;border-radius:4px;background:#2d1a06;color:#fcd34d;font-family:'Liberation Mono',monospace;font-size:11px;line-height:20px;white-space:pre;">DR 27</div><div style="position:absolute;left:12px;top:39px;font-size:11.6px;color:#8b95a6;line-height:16px;white-space:nowrap;">Celina, TX</div><div style="position:absolute;left:12px;top:61px;font-size:11.9px;color:#8b95a6;line-height:16px;white-space:nowrap;">+14692023018</div><div style="position:absolute;right:12px;top:69px;width:12px;height:1.2px;background:#f1f5f9;"></div><div style="position:absolute;left:12px;top:88px;font-size:11.7px;color:#8b95a6;line-height:16px;white-space:nowrap;">Taylor Brooks</div></div><div style="position:absolute;left:8px;top:690px;width:276px;height:117px;box-sizing:border-box;background:#1e283b;border:1px solid #232d40;border-radius:6px;overflow:hidden;"><div style="position:absolute;left:12px;top:13px;width:190px;font-size:13.3px;font-weight:700;color:#f8fafc;line-height:18px;white-space:nowrap;">Allied Auto Works</div><div style="position:absolute;right:12px;top:12px;height:20px;padding:0 6px;border-radius:4px;background:#052e16;color:#4ade80;font-family:'Liberation Mono',monospace;font-size:11px;line-height:20px;white-space:pre;">DR 42</div><div style="position:absolute;left:12px;top:39px;font-size:11.6px;color:#8b95a6;line-height:16px;white-space:nowrap;">Los Altos, CA</div><div style="position:absolute;left:12px;top:61px;font-size:11.9px;color:#8b95a6;line-height:16px;white-space:nowrap;">+16505427178</div><div style="position:absolute;right:12px;top:69px;width:12px;height:1.2px;background:#f1f5f9;"></div><div style="position:absolute;left:12px;top:88px;font-size:11.7px;color:#8b95a6;line-height:16px;white-space:nowrap;">Taylor Brooks</div></div><div style="position:absolute;left:8px;top:815px;width:276px;height:117px;box-sizing:border-box;background:#1e283b;border:1px solid #232d40;border-radius:6px;overflow:hidden;"><div style="position:absolute;left:12px;top:13px;width:190px;font-size:13.3px;font-weight:700;color:#f8fafc;line-height:18px;white-space:nowrap;">D &amp; V Auto Repair</div><div style="position:absolute;right:12px;top:12px;height:20px;padding:0 6px;border-radius:4px;background:#052e16;color:#4ade80;font-family:'Liberation Mono',monospace;font-size:11px;line-height:20px;white-space:pre;">DR 42</div><div style="position:absolute;left:12px;top:39px;font-size:11.6px;color:#8b95a6;line-height:16px;white-space:nowrap;">Plano, TX</div><div style="position:absolute;left:12px;top:61px;font-size:11.9px;color:#8b95a6;line-height:16px;white-space:nowrap;">+19725551234</div><div style="position:absolute;right:12px;top:69px;width:12px;height:1.2px;background:#f1f5f9;"></div><div style="position:absolute;left:12px;top:88px;font-size:11.7px;color:#8b95a6;line-height:16px;white-space:nowrap;">Taylor Brooks</div></div></div><div style="position:absolute;left:1184px;top:227px;width:300px;height:900px;box-sizing:border-box;background:#131d2e;border:1px solid #1d2638;border-radius:9px;overflow:hidden;"><div style="position:absolute;left:0;top:-1px;width:298px;height:43px;background:#ffedd5;border-radius:9px 9px 0 0;"></div><div style="position:absolute;left:12px;top:13px;font-size:13px;font-weight:700;color:rgba(255,255,255,0.72);line-height:18px;">Follow Up</div><div style="position:absolute;left:251px;top:10px;width:35px;height:22px;border-radius:6px;background:#1e293b;font-family:'Liberation Mono',monospace;font-size:12px;padding-top:1px;box-sizing:border-box;font-weight:700;color:#f8fafc;line-height:23px;text-align:center;">10</div><div style="position:absolute;left:292px;top:42px;width:6px;height:590px;background:#212a3a;border-radius:3px;"></div><div style="position:absolute;left:8px;top:50px;width:276px;height:117px;box-sizing:border-box;background:#1e283b;border:1px solid #232d40;border-radius:6px;overflow:hidden;"><div style="position:absolute;left:12px;top:13px;width:190px;font-size:13.3px;font-weight:700;color:#f8fafc;line-height:18px;white-space:nowrap;">Silverstar Motorwerks</div><div style="position:absolute;right:12px;top:12px;height:20px;padding:0 6px;border-radius:4px;background:#450a0a;color:#f87171;font-family:'Liberation Mono',monospace;font-size:11px;line-height:20px;white-space:pre;">DR 6</div><div style="position:absolute;left:12px;top:39px;font-size:11.6px;color:#8b95a6;line-height:16px;white-space:nowrap;">Lake Forest, IL</div><div style="position:absolute;left:12px;top:61px;font-size:11.9px;color:#8b95a6;line-height:16px;white-space:nowrap;">+18474449167</div><div style="position:absolute;right:12px;top:69px;width:12px;height:1.2px;background:#f1f5f9;"></div><div style="position:absolute;left:12px;top:88px;font-size:11.7px;color:#8b95a6;line-height:16px;white-space:nowrap;">Sam Okafor</div></div><div style="position:absolute;left:8px;top:175px;width:276px;height:117px;box-sizing:border-box;background:#1e283b;border:1px solid #232d40;border-radius:6px;overflow:hidden;"><div style="position:absolute;left:12px;top:13px;width:190px;font-size:13.3px;font-weight:700;color:#f8fafc;line-height:18px;white-space:nowrap;">Mporium BMW Service</div><div style="position:absolute;right:12px;top:12px;height:20px;padding:0 6px;border-radius:4px;background:#2d1a06;color:#fcd34d;font-family:'Liberation Mono',monospace;font-size:11px;line-height:20px;white-space:pre;">DR 26</div><div style="position:absolute;left:12px;top:39px;font-size:11.6px;color:#8b95a6;line-height:16px;white-space:nowrap;">McKinney, TX</div><div style="position:absolute;left:12px;top:61px;font-size:11.9px;color:#8b95a6;line-height:16px;white-space:nowrap;">+12146426365</div><div style="position:absolute;right:12px;top:69px;width:12px;height:1.2px;background:#f1f5f9;"></div><div style="position:absolute;left:12px;top:88px;font-size:11.7px;color:#8b95a6;line-height:16px;white-space:nowrap;">Sam Okafor</div></div><div style="position:absolute;left:8px;top:300px;width:276px;height:117px;box-sizing:border-box;background:#1e283b;border:1px solid #232d40;border-radius:6px;overflow:hidden;"><div style="position:absolute;left:12px;top:13px;width:190px;font-size:13.3px;font-weight:700;color:#f8fafc;line-height:18px;white-space:nowrap;">EurAuto Shop</div><div style="position:absolute;right:12px;top:12px;height:20px;padding:0 6px;border-radius:4px;background:#052e16;color:#4ade80;font-family:'Liberation Mono',monospace;font-size:11px;line-height:20px;white-space:pre;">DR 43</div><div style="position:absolute;left:12px;top:39px;font-size:11.6px;color:#8b95a6;line-height:16px;white-space:nowrap;">Plano, TX</div><div style="position:absolute;left:12px;top:61px;font-size:11.9px;color:#8b95a6;line-height:16px;white-space:nowrap;">+12145524194</div><div style="position:absolute;right:12px;top:69px;width:12px;height:1.2px;background:#f1f5f9;"></div><div style="position:absolute;left:12px;top:88px;font-size:11.7px;color:#8b95a6;line-height:16px;white-space:nowrap;">Sam Okafor</div></div><div style="position:absolute;left:8px;top:425px;width:276px;height:117px;box-sizing:border-box;background:#1e283b;border:1px solid #232d40;border-radius:6px;overflow:hidden;"><div style="position:absolute;left:12px;top:13px;width:190px;font-size:13.3px;font-weight:700;color:#f8fafc;line-height:18px;white-space:nowrap;">Reitmeir's Werkstatt Inc.</div><div style="position:absolute;right:12px;top:12px;height:20px;padding:0 6px;border-radius:4px;background:#052e16;color:#4ade80;font-family:'Liberation Mono',monospace;font-size:11px;line-height:20px;white-space:pre;">DR 53</div><div style="position:absolute;left:12px;top:39px;font-size:11.6px;color:#8b95a6;line-height:16px;white-space:nowrap;">Los Altos, CA</div><div style="position:absolute;left:12px;top:61px;font-size:11.9px;color:#8b95a6;line-height:16px;white-space:nowrap;">+16509414331</div><div style="position:absolute;right:12px;top:69px;width:12px;height:1.2px;background:#f1f5f9;"></div><div style="position:absolute;left:12px;top:88px;font-size:11.7px;color:#8b95a6;line-height:16px;white-space:nowrap;">Taylor Brooks</div></div><div style="position:absolute;left:8px;top:550px;width:276px;height:117px;box-sizing:border-box;background:#1e283b;border:1px solid #232d40;border-radius:6px;overflow:hidden;"><div style="position:absolute;left:12px;top:13px;width:190px;font-size:13.3px;font-weight:700;color:#f8fafc;line-height:18px;white-space:nowrap;">Europa Imports</div><div style="position:absolute;right:12px;top:12px;height:20px;padding:0 6px;border-radius:4px;background:#052e16;color:#4ade80;font-family:'Liberation Mono',monospace;font-size:11px;line-height:20px;white-space:pre;">DR 34</div><div style="position:absolute;left:12px;top:39px;font-size:11.6px;color:#8b95a6;line-height:16px;white-space:nowrap;">Winnetka, IL</div><div style="position:absolute;left:12px;top:61px;font-size:11.9px;color:#8b95a6;line-height:16px;white-space:nowrap;">+18474469500</div><div style="position:absolute;right:12px;top:69px;width:12px;height:1.2px;background:#f1f5f9;"></div><div style="position:absolute;left:12px;top:88px;font-size:11.7px;color:#8b95a6;line-height:16px;white-space:nowrap;">Taylor Brooks</div></div><div style="position:absolute;left:8px;top:675px;width:276px;height:117px;box-sizing:border-box;background:#1e283b;border:1px solid #232d40;border-radius:6px;overflow:hidden;"><div style="position:absolute;left:12px;top:13px;width:190px;font-size:13.3px;font-weight:700;color:#f8fafc;line-height:18px;white-space:nowrap;">Ultimate Auto Works</div><div style="position:absolute;right:12px;top:12px;height:20px;padding:0 6px;border-radius:4px;background:#052e16;color:#4ade80;font-family:'Liberation Mono',monospace;font-size:11px;line-height:20px;white-space:pre;">DR 47</div><div style="position:absolute;left:12px;top:39px;font-size:11.6px;color:#8b95a6;line-height:16px;white-space:nowrap;">Scottsdale, AZ</div><div style="position:absolute;left:12px;top:61px;font-size:11.9px;color:#8b95a6;line-height:16px;white-space:nowrap;">+14809221068</div><div style="position:absolute;right:12px;top:69px;width:12px;height:1.2px;background:#f1f5f9;"></div><div style="position:absolute;left:12px;top:88px;font-size:11.7px;color:#8b95a6;line-height:16px;white-space:nowrap;">Taylor Brooks</div></div><div style="position:absolute;left:8px;top:800px;width:276px;height:117px;box-sizing:border-box;background:#1e283b;border:1px solid #232d40;border-radius:6px;overflow:hidden;"><div style="position:absolute;left:12px;top:13px;width:190px;font-size:13.3px;font-weight:700;color:#f8fafc;line-height:18px;white-space:nowrap;">Goody's Automotive</div><div style="position:absolute;right:12px;top:12px;height:20px;padding:0 6px;border-radius:4px;background:#052e16;color:#4ade80;font-family:'Liberation Mono',monospace;font-size:11px;line-height:20px;white-space:pre;">DR 49</div><div style="position:absolute;left:12px;top:39px;font-size:11.6px;color:#8b95a6;line-height:16px;white-space:nowrap;">Scottsdale, AZ</div><div style="position:absolute;left:12px;top:61px;font-size:11.9px;color:#8b95a6;line-height:16px;white-space:nowrap;">+14805550000</div><div style="position:absolute;right:12px;top:69px;width:12px;height:1.2px;background:#f1f5f9;"></div><div style="position:absolute;left:12px;top:88px;font-size:11.7px;color:#8b95a6;line-height:16px;white-space:nowrap;">Taylor Brooks</div></div></div><div style="position:absolute;left:1496px;top:227px;width:300px;height:900px;box-sizing:border-box;background:#131d2e;border:1px solid #1d2638;border-radius:9px;overflow:hidden;"><div style="position:absolute;left:0;top:0;width:298px;height:42px;background:transparent;border-radius:8px 8px 0 0;"></div><div style="position:absolute;left:12px;top:13px;font-size:13px;font-weight:700;color:#4338ca;line-height:18px;">Paperwork</div><div style="position:absolute;left:258px;top:10px;width:28px;height:22px;border-radius:6px;background:#1c2536;font-size:11.5px;font-weight:700;color:#f8fafc;line-height:23px;text-align:center;">9</div><div style="position:absolute;left:292px;top:42px;width:6px;height:655px;background:#212a3a;border-radius:3px;"></div><div style="position:absolute;left:8px;top:50px;width:276px;height:117px;box-sizing:border-box;background:#1e283b;border:1px solid #232d40;border-radius:6px;overflow:hidden;"><div style="position:absolute;left:12px;top:13px;width:190px;font-size:13.3px;font-weight:700;color:#f8fafc;line-height:18px;white-space:nowrap;">Scottsdale European Service</div><div style="position:absolute;right:12px;top:12px;height:20px;padding:0 6px;border-radius:4px;background:#052e16;color:#4ade80;font-family:'Liberation Mono',monospace;font-size:11px;line-height:20px;white-space:pre;">DR 45</div><div style="position:absolute;left:12px;top:39px;font-size:11.6px;color:#8b95a6;line-height:16px;white-space:nowrap;">Scottsdale, AZ</div><div style="position:absolute;left:12px;top:61px;font-size:11.9px;color:#8b95a6;line-height:16px;white-space:nowrap;">+14804734722</div><div style="position:absolute;right:12px;top:69px;width:12px;height:1.2px;background:#f1f5f9;"></div><div style="position:absolute;left:12px;top:88px;font-size:11.7px;color:#8b95a6;line-height:16px;white-space:nowrap;">Sam Okafor</div></div><div style="position:absolute;left:8px;top:175px;width:276px;height:117px;box-sizing:border-box;background:#1e283b;border:1px solid #232d40;border-radius:6px;overflow:hidden;"><div style="position:absolute;left:12px;top:13px;width:190px;font-size:13.3px;font-weight:700;color:#f8fafc;line-height:18px;white-space:nowrap;">Munich Motorwerke</div><div style="position:absolute;right:12px;top:12px;height:20px;padding:0 6px;border-radius:4px;background:#052e16;color:#4ade80;font-family:'Liberation Mono',monospace;font-size:11px;line-height:20px;white-space:pre;">DR 37</div><div style="position:absolute;left:12px;top:39px;font-size:11.6px;color:#8b95a6;line-height:16px;white-space:nowrap;">Houston, TX</div><div style="position:absolute;left:12px;top:61px;font-size:11.9px;color:#8b95a6;line-height:16px;white-space:nowrap;">+17139779672</div><div style="position:absolute;right:12px;top:69px;width:12px;height:1.2px;background:#f1f5f9;"></div><div style="position:absolute;left:12px;top:88px;font-size:11.7px;color:#8b95a6;line-height:16px;white-space:nowrap;">Sam Okafor</div></div><div style="position:absolute;left:8px;top:300px;width:276px;height:117px;box-sizing:border-box;background:#1e283b;border:1px solid #232d40;border-radius:6px;overflow:hidden;"><div style="position:absolute;left:12px;top:13px;width:190px;font-size:13.3px;font-weight:700;color:#f8fafc;line-height:18px;white-space:nowrap;">Roby BMW specialist</div><div style="position:absolute;right:12px;top:12px;height:20px;padding:0 6px;border-radius:4px;background:#2d1a06;color:#fcd34d;font-family:'Liberation Mono',monospace;font-size:11px;line-height:20px;white-space:pre;">DR 17</div><div style="position:absolute;left:12px;top:39px;font-size:11.6px;color:#8b95a6;line-height:16px;white-space:nowrap;">Plano, TX</div><div style="position:absolute;left:12px;top:61px;font-size:11.9px;color:#8b95a6;line-height:16px;white-space:nowrap;">+19722138634</div><div style="position:absolute;right:12px;top:69px;width:12px;height:1.2px;background:#f1f5f9;"></div><div style="position:absolute;left:12px;top:88px;font-size:11.7px;color:#8b95a6;line-height:16px;white-space:nowrap;">Sam Okafor</div></div><div style="position:absolute;left:8px;top:425px;width:276px;height:117px;box-sizing:border-box;background:#1e283b;border:1px solid #232d40;border-radius:6px;overflow:hidden;"><div style="position:absolute;left:12px;top:13px;width:190px;font-size:13.3px;font-weight:700;color:#f8fafc;line-height:18px;white-space:nowrap;">Texas German Autohaus</div><div style="position:absolute;right:12px;top:12px;height:20px;padding:0 6px;border-radius:4px;background:#450a0a;color:#f87171;font-family:'Liberation Mono',monospace;font-size:11px;line-height:20px;white-space:pre;">DR 6</div><div style="position:absolute;left:12px;top:39px;font-size:11.6px;color:#8b95a6;line-height:16px;white-space:nowrap;">Houston, TX</div><div style="position:absolute;left:12px;top:61px;font-size:11.9px;color:#8b95a6;line-height:16px;white-space:nowrap;">+17135975684</div><div style="position:absolute;right:12px;top:69px;width:12px;height:1.2px;background:#f1f5f9;"></div><div style="position:absolute;left:12px;top:88px;font-size:11.7px;color:#8b95a6;line-height:16px;white-space:nowrap;">Sam Okafor</div></div><div style="position:absolute;left:8px;top:550px;width:276px;height:117px;box-sizing:border-box;background:#1e283b;border:1px solid #232d40;border-radius:6px;overflow:hidden;"><div style="position:absolute;left:12px;top:13px;width:190px;font-size:13.3px;font-weight:700;color:#f8fafc;line-height:18px;white-space:nowrap;">Orinda Shell Auto Care</div><div style="position:absolute;right:12px;top:12px;height:20px;padding:0 6px;border-radius:4px;background:#052e16;color:#4ade80;font-family:'Liberation Mono',monospace;font-size:11px;line-height:20px;white-space:pre;">DR 55</div><div style="position:absolute;left:12px;top:39px;font-size:11.6px;color:#8b95a6;line-height:16px;white-space:nowrap;">Orinda, CA</div><div style="position:absolute;left:12px;top:61px;font-size:11.9px;color:#8b95a6;line-height:16px;white-space:nowrap;">+19252541486</div><div style="position:absolute;right:12px;top:69px;width:12px;height:1.2px;background:#f1f5f9;"></div><div style="position:absolute;left:12px;top:88px;font-size:11.7px;color:#8b95a6;line-height:16px;white-space:nowrap;">Taylor Brooks</div></div><div style="position:absolute;left:8px;top:675px;width:276px;height:117px;box-sizing:border-box;background:#1e283b;border:1px solid #232d40;border-radius:6px;overflow:hidden;"><div style="position:absolute;left:12px;top:13px;width:190px;font-size:13.3px;font-weight:700;color:#f8fafc;line-height:18px;white-space:nowrap;">Elite European Auto, LLC</div><div style="position:absolute;right:12px;top:12px;height:20px;padding:0 6px;border-radius:4px;background:#052e16;color:#4ade80;font-family:'Liberation Mono',monospace;font-size:11px;line-height:20px;white-space:pre;">DR 57</div><div style="position:absolute;left:12px;top:39px;font-size:11.6px;color:#8b95a6;line-height:16px;white-space:nowrap;">Frisco, TX</div><div style="position:absolute;left:12px;top:61px;font-size:11.9px;color:#8b95a6;line-height:16px;white-space:nowrap;">+14699298001</div><div style="position:absolute;right:12px;top:69px;width:12px;height:1.2px;background:#f1f5f9;"></div><div style="position:absolute;left:12px;top:88px;font-size:11.7px;color:#8b95a6;line-height:16px;white-space:nowrap;">Taylor Brooks</div></div><div style="position:absolute;left:8px;top:800px;width:276px;height:117px;box-sizing:border-box;background:#1e283b;border:1px solid #232d40;border-radius:6px;overflow:hidden;"><div style="position:absolute;left:12px;top:13px;width:190px;font-size:13.3px;font-weight:700;color:#f8fafc;line-height:18px;white-space:nowrap;">Orinda Motors, Inc.</div><div style="position:absolute;right:12px;top:12px;height:20px;padding:0 6px;border-radius:4px;background:#052e16;color:#4ade80;font-family:'Liberation Mono',monospace;font-size:11px;line-height:20px;white-space:pre;">DR 44</div><div style="position:absolute;left:12px;top:39px;font-size:11.6px;color:#8b95a6;line-height:16px;white-space:nowrap;">Orinda, CA</div><div style="position:absolute;left:12px;top:61px;font-size:11.9px;color:#8b95a6;line-height:16px;white-space:nowrap;">+19252545555</div><div style="position:absolute;right:12px;top:69px;width:12px;height:1.2px;background:#f1f5f9;"></div><div style="position:absolute;left:12px;top:88px;font-size:11.7px;color:#8b95a6;line-height:16px;white-space:nowrap;">Taylor Brooks</div></div></div><div style="position:absolute;left:1808px;top:227px;width:300px;height:900px;box-sizing:border-box;background:#131d2e;border:1px solid #1d2638;border-radius:9px;overflow:hidden;"><div style="position:absolute;left:0;top:-1px;width:298px;height:43px;background:#dcfce7;border-radius:9px 9px 0 0;"></div><div style="position:absolute;left:12px;top:13px;font-size:13px;font-weight:700;color:#4ade80;line-height:18px;">Won</div><div style="position:absolute;left:8px;top:50px;width:276px;height:114.5px;box-sizing:border-box;background:#1e283b;border:1px solid #232d40;border-radius:6px;overflow:hidden;"><div style="position:absolute;left:12px;top:13px;width:190px;font-size:13.3px;font-weight:700;color:#f8fafc;line-height:18px;white-space:nowrap;">[DEMO] Newport Beach Motors</div><div style="position:absolute;left:12px;top:37px;font-size:11.6px;color:#8b95a6;line-height:16px;white-space:nowrap;">Newport Beach, CA</div><div style="position:absolute;left:12px;top:59px;font-size:11.9px;color:#8b95a6;line-height:16px;white-space:nowrap;">9495550307</div><div style="position:absolute;left:12px;top:86px;font-size:11.7px;color:#8b95a6;line-height:16px;white-space:nowrap;">Sam Okafor</div></div><div style="position:absolute;left:8px;top:172.5px;width:276px;height:114.5px;box-sizing:border-box;background:#1e283b;border:1px solid #232d40;border-radius:6px;overflow:hidden;"><div style="position:absolute;left:12px;top:13px;width:190px;font-size:13.3px;font-weight:700;color:#f8fafc;line-height:18px;white-space:nowrap;">[DEMO] Orange County Auto</div><div style="position:absolute;left:12px;top:37px;font-size:11.6px;color:#8b95a6;line-height:16px;white-space:nowrap;">Orange, CA</div><div style="position:absolute;left:12px;top:59px;font-size:11.9px;color:#8b95a6;line-height:16px;white-space:nowrap;">7145550306</div><div style="position:absolute;left:12px;top:86px;font-size:11.7px;color:#8b95a6;line-height:16px;white-space:nowrap;">Sam Okafor</div></div><div style="position:absolute;left:8px;top:295.0px;width:276px;height:114.5px;box-sizing:border-box;background:#1e283b;border:1px solid #232d40;border-radius:6px;overflow:hidden;"><div style="position:absolute;left:12px;top:13px;width:190px;font-size:13.3px;font-weight:700;color:#f8fafc;line-height:18px;white-space:nowrap;">[DEMO] Calabasas Euro</div><div style="position:absolute;left:12px;top:37px;font-size:11.6px;color:#8b95a6;line-height:16px;white-space:nowrap;">Calabasas, CA</div><div style="position:absolute;left:12px;top:59px;font-size:11.9px;color:#8b95a6;line-height:16px;white-space:nowrap;">8185550305</div><div style="position:absolute;left:12px;top:86px;font-size:11.7px;color:#8b95a6;line-height:16px;white-space:nowrap;">Sam Okafor</div></div><div style="position:absolute;left:8px;top:417.5px;width:276px;height:114.5px;box-sizing:border-box;background:#1e283b;border:1px solid #232d40;border-radius:6px;overflow:hidden;"><div style="position:absolute;left:12px;top:13px;width:190px;font-size:13.3px;font-weight:700;color:#f8fafc;line-height:18px;white-space:nowrap;">[DEMO] Sherman Oaks Auto</div><div style="position:absolute;left:12px;top:37px;font-size:11.6px;color:#8b95a6;line-height:16px;white-space:nowrap;">Sherman Oaks, CA</div><div style="position:absolute;left:12px;top:59px;font-size:11.9px;color:#8b95a6;line-height:16px;white-space:nowrap;">8185550304</div><div style="position:absolute;left:12px;top:86px;font-size:11.7px;color:#8b95a6;line-height:16px;white-space:nowrap;">Sam Okafor</div></div><div style="position:absolute;left:8px;top:540.0px;width:276px;height:114.5px;box-sizing:border-box;background:#1e283b;border:1px solid #232d40;border-radius:6px;overflow:hidden;"><div style="position:absolute;left:12px;top:13px;width:190px;font-size:13.3px;font-weight:700;color:#f8fafc;line-height:18px;white-space:nowrap;">[DEMO] Pasadena Motors</div><div style="position:absolute;left:12px;top:37px;font-size:11.6px;color:#8b95a6;line-height:16px;white-space:nowrap;">Pasadena, CA</div><div style="position:absolute;left:12px;top:59px;font-size:11.9px;color:#8b95a6;line-height:16px;white-space:nowrap;">6265550303</div><div style="position:absolute;left:12px;top:86px;font-size:11.7px;color:#8b95a6;line-height:16px;white-space:nowrap;">Sam Okafor</div></div><div style="position:absolute;left:8px;top:662.5px;width:276px;height:114.5px;box-sizing:border-box;background:#1e283b;border:1px solid #232d40;border-radius:6px;overflow:hidden;"><div style="position:absolute;left:12px;top:13px;width:190px;font-size:13.3px;font-weight:700;color:#f8fafc;line-height:18px;white-space:nowrap;">[DEMO] Mid City Auto</div><div style="position:absolute;left:12px;top:37px;font-size:11.6px;color:#8b95a6;line-height:16px;white-space:nowrap;">Los Angeles, CA</div><div style="position:absolute;left:12px;top:59px;font-size:11.9px;color:#8b95a6;line-height:16px;white-space:nowrap;">3105550302</div><div style="position:absolute;left:12px;top:86px;font-size:11.7px;color:#8b95a6;line-height:16px;white-space:nowrap;">Sam Okafor</div></div><div style="position:absolute;left:8px;top:785.0px;width:276px;height:114.5px;box-sizing:border-box;background:#1e283b;border:1px solid #232d40;border-radius:6px;overflow:hidden;"><div style="position:absolute;left:12px;top:13px;width:190px;font-size:13.3px;font-weight:700;color:#f8fafc;line-height:18px;white-space:nowrap;">[DEMO] Crenshaw Auto</div><div style="position:absolute;left:12px;top:37px;font-size:11.6px;color:#8b95a6;line-height:16px;white-space:nowrap;">Los Angeles, CA</div><div style="position:absolute;left:12px;top:59px;font-size:11.9px;color:#8b95a6;line-height:16px;white-space:nowrap;">3235550301</div><div style="position:absolute;left:12px;top:86px;font-size:11.7px;color:#8b95a6;line-height:16px;white-space:nowrap;">Sam Okafor</div></div></div></div></div><div style="position:absolute;left:1914px;top:0px;width:5px;height:1079px;background:#121a29;"></div><div style="position:absolute;left:1914px;top:0px;width:5px;height:990px;background:#1e2637;border-radius:2px;"></div><div style="position:absolute;left:1872px;top:1032px;width:33px;height:33px;border-radius:50%;background:#818cf8;"><div style="position:absolute;left:9px;top:14px;width:5px;height:5px;border-radius:50%;background:#1e1b4b"></div><div style="position:absolute;left:19px;top:14px;width:5px;height:5px;border-radius:50%;background:#1e1b4b"></div></div>
</div></body></html>
